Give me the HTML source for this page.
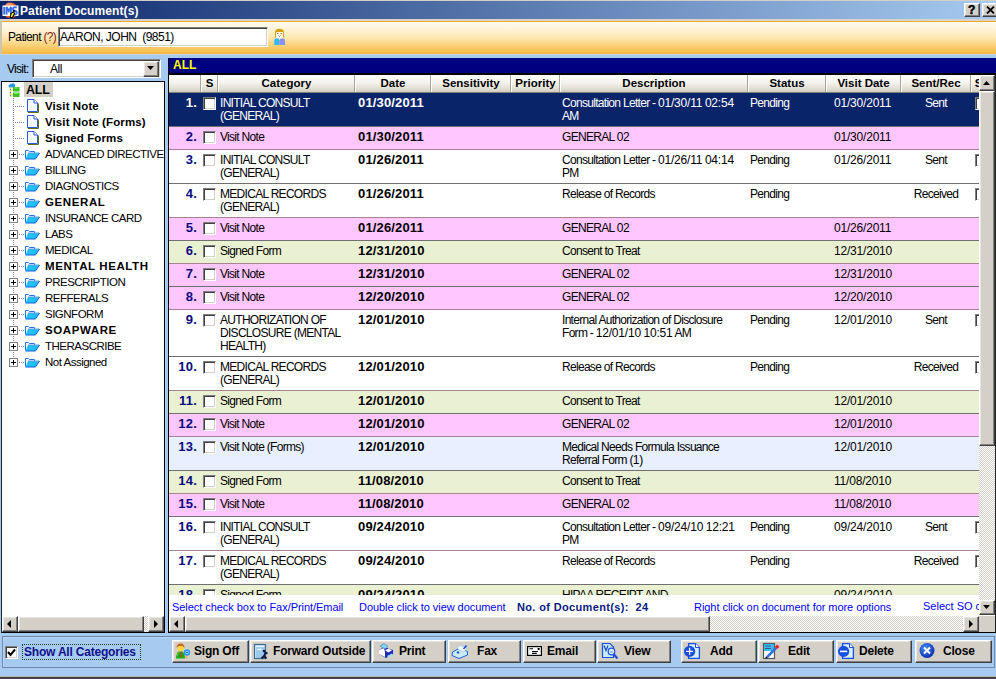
<!DOCTYPE html><html><head><meta charset="utf-8"><style>
*{box-sizing:border-box}
html,body{margin:0;padding:0}
body{width:996px;height:679px;position:relative;overflow:hidden;background:#a6caf0;font-family:'Liberation Sans',sans-serif;font-size:12px;color:#000}
.abs{position:absolute}
.t{position:absolute;white-space:nowrap;line-height:13px}
.btn3d{position:absolute;background:#d4d0c8;border-top:1px solid #fff;border-left:1px solid #fff;border-right:1px solid #404040;border-bottom:1px solid #404040;box-shadow:inset -1px -1px 0 #808080, inset 1px 1px 0 #e8e6e0}
.sunk{position:absolute;border-top:1px solid #808080;border-left:1px solid #808080;border-right:1px solid #fff;border-bottom:1px solid #fff;box-shadow:inset 1px 1px 0 #404040, inset -1px -1px 0 #d4d0c8}
.chk{position:absolute;width:13px;height:13px;background:#fff;border-top:1px solid #808080;border-left:1px solid #808080;border-right:1px solid #fff;border-bottom:1px solid #fff;box-shadow:inset 1px 1px 0 #404040, inset -1px -1px 0 #d4d0c8}
.dither{background-color:#fff;background-image:linear-gradient(45deg,#d4d0c8 25%,transparent 25%,transparent 75%,#d4d0c8 75%),linear-gradient(45deg,#d4d0c8 25%,transparent 25%,transparent 75%,#d4d0c8 75%);background-size:2px 2px;background-position:0 0,1px 1px}
.hd{position:absolute;top:75px;height:18px;background:linear-gradient(#fdfdfb 0%,#f4f3ee 45%,#e2ded4 80%,#d0ccc0 100%);border-bottom:1px solid #808078}
.hs{position:absolute;top:75px;width:2px;height:17px;border-left:1px solid #a8a498;border-right:1px solid #fff}
.ht{position:absolute;top:77px;font-weight:bold;font-size:11.5px;line-height:13px;white-space:nowrap;text-align:center}
.row{position:absolute;left:169px;width:810px}
.num{position:absolute;font-weight:bold;font-size:13px;color:#0a0a80;text-align:right;width:28px;left:0;top:6px;line-height:13px;letter-spacing:0.2px}
.cell{position:absolute;top:5px;font-size:12px;letter-spacing:-0.7px;line-height:13px;white-space:nowrap}
.date{position:absolute;top:6px;left:189px;font-weight:bold;font-size:13px;letter-spacing:0.15px;line-height:13px}
.dg{letter-spacing:-0.2px}
.tree{position:absolute;white-space:nowrap;font-size:11.5px;line-height:13px;letter-spacing:-0.5px}
.tb{font-weight:bold;letter-spacing:0.1px}
.btxt{position:absolute;top:4px;font-weight:bold;font-size:12px;line-height:13px;white-space:nowrap;letter-spacing:-0.2px}
</style></head><body>
<div class="abs" style="left:0;top:0;width:996px;height:1px;background:#d4d0c8"></div>
<div class="abs" style="left:0;top:1px;width:996px;height:18px;background:linear-gradient(90deg,#0a246a 0%,#a6caf0 100%)"></div>
<svg class="abs" style="left:1px;top:1px" width="18" height="18" viewBox="0 0 18 18">
<circle cx="9.5" cy="9.5" r="7.8" fill="#e85820"/><circle cx="8.5" cy="6" r="4.5" fill="#ffa080" opacity=".7"/>
<rect x="1.5" y="4.5" width="16" height="10.5" fill="#fff"/>
<path d="M3.2 6 V13.5 M5.6 13.5 V6 L7.8 10 L10 6 V13.5 M15.8 6.5 Q12 5.5 12 8 Q12 9.5 14 9.8 Q16 10.2 15.6 12.5 Q14.5 14.2 11.8 13" stroke="#3870f0" stroke-width="1.9" fill="none"/>
<path d="M9.2 16.5 L10 12.5 L12.5 10.5 L13.5 12.5 L11.5 16.5Z" fill="#f8f000" stroke="#000" stroke-width="1.1"/>
<circle cx="13" cy="10" r="1" fill="#000"/>
</svg>
<div class="t" style="left:20px;top:5px;color:#fff;font-weight:bold;font-size:12px;letter-spacing:0.1px">Patient Document(s)</div>
<div class="btn3d" style="left:964px;top:3px;width:16px;height:14px"><div class="t" style="left:3px;top:0px;font-weight:bold;font-size:12px;-webkit-text-stroke:0.5px #000">?</div></div>
<div class="btn3d" style="left:982px;top:3px;width:16px;height:14px"><svg class="abs" style="left:3px;top:2px" width="9" height="8"><path d="M1 0.5 L8 7.5 M8 0.5 L1 7.5" stroke="#000" stroke-width="1.8"/></svg></div>
<div class="abs" style="left:0;top:19px;width:996px;height:2px;background:#d8d4cc"></div>
<div class="abs" style="left:1px;top:21px;width:995px;height:33px;background:linear-gradient(#fffbee 0%,#fff5dc 20%,#fde6b0 50%,#f9ca68 80%,#f6b640 100%);border-top:1px solid #f0a828;border-left:1px solid #f0c070"></div>
<div class="t" style="left:8px;top:31px;font-size:12px;letter-spacing:-0.65px">Patient <span style="color:#8b1a1a">(?)</span></div>
<div class="sunk" style="left:58px;top:27px;width:210px;height:20px;background:#fff"></div>
<div class="t" style="left:60px;top:31px;font-size:12px;letter-spacing:-0.5px">AARON, JOHN&nbsp; (9851)</div>
<svg class="abs" style="left:274px;top:28px" width="12" height="18" viewBox="0 0 12 18">
<path d="M1 9.5 V4.5 Q1 0.8 5.5 0.8 Q10 0.8 10 4.5 V9.5 Z" fill="#d8a000"/>
<rect x="2.2" y="4" width="6.8" height="6.3" fill="#fff"/>
<path d="M3 5.6 h1.5 M6.6 5.6 h1.5" stroke="#806000" stroke-width=".9"/><path d="M4.5 7.4 L5.6 8.6 L6.7 7.4" stroke="#806000" stroke-width=".8" fill="none"/>
<path d="M0.3 17 V13 Q0.3 10.5 3 10.3 L5.5 11 V17Z" fill="#30b8f8"/>
<path d="M5.5 11 L8.2 10.3 Q11 10.5 11 13 V17 H5.5Z" fill="#8890f0"/>
<path d="M4.5 10.5 L5.6 12 L6.6 10.5Z" fill="#fff"/>
</svg>
<div class="abs" style="left:0;top:54px;width:996px;height:1px;background:#c8d4e0"></div>
<div class="t" style="left:7px;top:63px;font-size:12px;letter-spacing:-0.7px">Visit:</div>
<div class="sunk" style="left:32px;top:59px;width:129px;height:19px;background:#fff"></div>
<div class="t" style="left:50px;top:63px;font-size:12px;letter-spacing:-0.5px">All</div>
<div class="btn3d" style="left:143px;top:61px;width:16px;height:16px"><svg class="abs" style="left:3px;top:4px" width="8" height="5"><path d="M0 0 H7 L3.5 4Z" fill="#000"/></svg></div>
<div class="abs" style="left:1px;top:81px;width:164px;height:552px;background:#fff;border:1px solid #000;border-left-color:#202020"></div>
<div class="abs" style="left:24px;top:82px;width:29px;height:15px;background:#d4d0c8"></div>
<div class="t" style="left:26px;top:84px;font-weight:bold;font-size:12.5px;letter-spacing:-0.2px">ALL</div>
<svg class="abs" style="left:8px;top:83px" width="12" height="15" viewBox="0 0 12 15">
<path d="M0.5 3.5 Q0.5 1 3 1 Q4 0 6 0.5 Q7.5 1 7 3 L6.5 4.5 H1Z" fill="#2a98f0"/>
<path d="M2.5 4.5 V14" stroke="#e8d050" stroke-width="1.2"/><path d="M2.5 6 v1 M2.5 9 v1 M2.5 12 v1" stroke="#4070e0" stroke-width="1.2"/>
<path d="M2.5 7 H5 M2.5 12 H5" stroke="#e8d050"/>
<path d="M5 4 H11.5 V8.5 H5Z M5 9.5 H11.5 V14 H5Z" fill="#38c020"/><path d="M6 5 h4 M6 10.5 h4" stroke="#a0f080" stroke-width=".8"/>
</svg>
<div class="abs" style="left:13px;top:98px;width:1px;height:266px;background-image:linear-gradient(#808080 50%,transparent 50%);background-size:1px 2px"></div>
<div class="abs" style="left:2px;top:82px;width:162px;height:534px;overflow:hidden">
<div class="abs" style="left:11px;top:24px;width:11px;height:1px;background-image:linear-gradient(90deg,#808080 50%,transparent 50%);background-size:2px 1px"></div>
<svg class="abs" style="left:25px;top:17px" width="12" height="14" viewBox="0 0 12 14"><path d="M0.5 0.5 H7 L10.5 4 V12.5 H0.5Z" fill="#f4faff" stroke="#2a5ae0"/><path d="M7 0.5 V4 H10.5" fill="#fff" stroke="#2a5ae0"/><path d="M1 13.5 H11.5 V4.5" stroke="#607010" fill="none"/></svg>
<div class="tree tb" style="left:43px;top:18px">Visit Note</div>
<div class="abs" style="left:11px;top:40px;width:11px;height:1px;background-image:linear-gradient(90deg,#808080 50%,transparent 50%);background-size:2px 1px"></div>
<svg class="abs" style="left:25px;top:33px" width="12" height="14" viewBox="0 0 12 14"><path d="M0.5 0.5 H7 L10.5 4 V12.5 H0.5Z" fill="#f4faff" stroke="#2a5ae0"/><path d="M7 0.5 V4 H10.5" fill="#fff" stroke="#2a5ae0"/><path d="M1 13.5 H11.5 V4.5" stroke="#607010" fill="none"/></svg>
<div class="tree tb" style="left:43px;top:34px">Visit Note (Forms)</div>
<div class="abs" style="left:11px;top:56px;width:11px;height:1px;background-image:linear-gradient(90deg,#808080 50%,transparent 50%);background-size:2px 1px"></div>
<svg class="abs" style="left:25px;top:49px" width="12" height="14" viewBox="0 0 12 14"><path d="M0.5 0.5 H7 L10.5 4 V12.5 H0.5Z" fill="#f4faff" stroke="#2a5ae0"/><path d="M7 0.5 V4 H10.5" fill="#fff" stroke="#2a5ae0"/><path d="M1 13.5 H11.5 V4.5" stroke="#607010" fill="none"/></svg>
<div class="tree tb" style="left:43px;top:50px">Signed Forms</div>
<div class="abs" style="left:17px;top:72px;width:5px;height:1px;background-image:linear-gradient(90deg,#808080 50%,transparent 50%);background-size:2px 1px"></div>
<svg class="abs" style="left:7px;top:68px" width="9" height="9" viewBox="0 0 9 9"><rect x=".5" y=".5" width="8" height="8" fill="#fff" stroke="#808080"/><path d="M2 4.5 H7 M4.5 2 V7" stroke="#000"/></svg>
<svg class="abs" style="left:23px;top:68px" width="15" height="10" viewBox="0 0 15 10"><path d="M0.5 8.5 V0.5 H3.5 L4.5 1.5 H9.5 V3" fill="#fff" stroke="#2a70e8"/><path d="M3 3 H14.5 L10.5 9 H0.5Z" fill="#22bff2"/><path d="M0.5 9 H10.5 L14.5 3" stroke="#1060e0" fill="none"/><path d="M3 3 H14" stroke="#60a0f0"/></svg>
<div class="tree" style="left:43px;top:66px">ADVANCED DIRECTIVE</div>
<div class="abs" style="left:17px;top:88px;width:5px;height:1px;background-image:linear-gradient(90deg,#808080 50%,transparent 50%);background-size:2px 1px"></div>
<svg class="abs" style="left:7px;top:84px" width="9" height="9" viewBox="0 0 9 9"><rect x=".5" y=".5" width="8" height="8" fill="#fff" stroke="#808080"/><path d="M2 4.5 H7 M4.5 2 V7" stroke="#000"/></svg>
<svg class="abs" style="left:23px;top:84px" width="15" height="10" viewBox="0 0 15 10"><path d="M0.5 8.5 V0.5 H3.5 L4.5 1.5 H9.5 V3" fill="#fff" stroke="#2a70e8"/><path d="M3 3 H14.5 L10.5 9 H0.5Z" fill="#22bff2"/><path d="M0.5 9 H10.5 L14.5 3" stroke="#1060e0" fill="none"/><path d="M3 3 H14" stroke="#60a0f0"/></svg>
<div class="tree" style="left:43px;top:82px">BILLING</div>
<div class="abs" style="left:17px;top:104px;width:5px;height:1px;background-image:linear-gradient(90deg,#808080 50%,transparent 50%);background-size:2px 1px"></div>
<svg class="abs" style="left:7px;top:100px" width="9" height="9" viewBox="0 0 9 9"><rect x=".5" y=".5" width="8" height="8" fill="#fff" stroke="#808080"/><path d="M2 4.5 H7 M4.5 2 V7" stroke="#000"/></svg>
<svg class="abs" style="left:23px;top:100px" width="15" height="10" viewBox="0 0 15 10"><path d="M0.5 8.5 V0.5 H3.5 L4.5 1.5 H9.5 V3" fill="#fff" stroke="#2a70e8"/><path d="M3 3 H14.5 L10.5 9 H0.5Z" fill="#22bff2"/><path d="M0.5 9 H10.5 L14.5 3" stroke="#1060e0" fill="none"/><path d="M3 3 H14" stroke="#60a0f0"/></svg>
<div class="tree" style="left:43px;top:98px">DIAGNOSTICS</div>
<div class="abs" style="left:17px;top:120px;width:5px;height:1px;background-image:linear-gradient(90deg,#808080 50%,transparent 50%);background-size:2px 1px"></div>
<svg class="abs" style="left:7px;top:116px" width="9" height="9" viewBox="0 0 9 9"><rect x=".5" y=".5" width="8" height="8" fill="#fff" stroke="#808080"/><path d="M2 4.5 H7 M4.5 2 V7" stroke="#000"/></svg>
<svg class="abs" style="left:23px;top:116px" width="15" height="10" viewBox="0 0 15 10"><path d="M0.5 8.5 V0.5 H3.5 L4.5 1.5 H9.5 V3" fill="#fff" stroke="#2a70e8"/><path d="M3 3 H14.5 L10.5 9 H0.5Z" fill="#22bff2"/><path d="M0.5 9 H10.5 L14.5 3" stroke="#1060e0" fill="none"/><path d="M3 3 H14" stroke="#60a0f0"/></svg>
<div class="tree tb" style="left:43px;top:114px;letter-spacing:0.6px">GENERAL</div>
<div class="abs" style="left:17px;top:136px;width:5px;height:1px;background-image:linear-gradient(90deg,#808080 50%,transparent 50%);background-size:2px 1px"></div>
<svg class="abs" style="left:7px;top:132px" width="9" height="9" viewBox="0 0 9 9"><rect x=".5" y=".5" width="8" height="8" fill="#fff" stroke="#808080"/><path d="M2 4.5 H7 M4.5 2 V7" stroke="#000"/></svg>
<svg class="abs" style="left:23px;top:132px" width="15" height="10" viewBox="0 0 15 10"><path d="M0.5 8.5 V0.5 H3.5 L4.5 1.5 H9.5 V3" fill="#fff" stroke="#2a70e8"/><path d="M3 3 H14.5 L10.5 9 H0.5Z" fill="#22bff2"/><path d="M0.5 9 H10.5 L14.5 3" stroke="#1060e0" fill="none"/><path d="M3 3 H14" stroke="#60a0f0"/></svg>
<div class="tree" style="left:43px;top:130px">INSURANCE CARD</div>
<div class="abs" style="left:17px;top:152px;width:5px;height:1px;background-image:linear-gradient(90deg,#808080 50%,transparent 50%);background-size:2px 1px"></div>
<svg class="abs" style="left:7px;top:148px" width="9" height="9" viewBox="0 0 9 9"><rect x=".5" y=".5" width="8" height="8" fill="#fff" stroke="#808080"/><path d="M2 4.5 H7 M4.5 2 V7" stroke="#000"/></svg>
<svg class="abs" style="left:23px;top:148px" width="15" height="10" viewBox="0 0 15 10"><path d="M0.5 8.5 V0.5 H3.5 L4.5 1.5 H9.5 V3" fill="#fff" stroke="#2a70e8"/><path d="M3 3 H14.5 L10.5 9 H0.5Z" fill="#22bff2"/><path d="M0.5 9 H10.5 L14.5 3" stroke="#1060e0" fill="none"/><path d="M3 3 H14" stroke="#60a0f0"/></svg>
<div class="tree" style="left:43px;top:146px">LABS</div>
<div class="abs" style="left:17px;top:168px;width:5px;height:1px;background-image:linear-gradient(90deg,#808080 50%,transparent 50%);background-size:2px 1px"></div>
<svg class="abs" style="left:7px;top:164px" width="9" height="9" viewBox="0 0 9 9"><rect x=".5" y=".5" width="8" height="8" fill="#fff" stroke="#808080"/><path d="M2 4.5 H7 M4.5 2 V7" stroke="#000"/></svg>
<svg class="abs" style="left:23px;top:164px" width="15" height="10" viewBox="0 0 15 10"><path d="M0.5 8.5 V0.5 H3.5 L4.5 1.5 H9.5 V3" fill="#fff" stroke="#2a70e8"/><path d="M3 3 H14.5 L10.5 9 H0.5Z" fill="#22bff2"/><path d="M0.5 9 H10.5 L14.5 3" stroke="#1060e0" fill="none"/><path d="M3 3 H14" stroke="#60a0f0"/></svg>
<div class="tree" style="left:43px;top:162px">MEDICAL</div>
<div class="abs" style="left:17px;top:184px;width:5px;height:1px;background-image:linear-gradient(90deg,#808080 50%,transparent 50%);background-size:2px 1px"></div>
<svg class="abs" style="left:7px;top:180px" width="9" height="9" viewBox="0 0 9 9"><rect x=".5" y=".5" width="8" height="8" fill="#fff" stroke="#808080"/><path d="M2 4.5 H7 M4.5 2 V7" stroke="#000"/></svg>
<svg class="abs" style="left:23px;top:180px" width="15" height="10" viewBox="0 0 15 10"><path d="M0.5 8.5 V0.5 H3.5 L4.5 1.5 H9.5 V3" fill="#fff" stroke="#2a70e8"/><path d="M3 3 H14.5 L10.5 9 H0.5Z" fill="#22bff2"/><path d="M0.5 9 H10.5 L14.5 3" stroke="#1060e0" fill="none"/><path d="M3 3 H14" stroke="#60a0f0"/></svg>
<div class="tree tb" style="left:43px;top:178px;letter-spacing:0.6px">MENTAL HEALTH</div>
<div class="abs" style="left:17px;top:200px;width:5px;height:1px;background-image:linear-gradient(90deg,#808080 50%,transparent 50%);background-size:2px 1px"></div>
<svg class="abs" style="left:7px;top:196px" width="9" height="9" viewBox="0 0 9 9"><rect x=".5" y=".5" width="8" height="8" fill="#fff" stroke="#808080"/><path d="M2 4.5 H7 M4.5 2 V7" stroke="#000"/></svg>
<svg class="abs" style="left:23px;top:196px" width="15" height="10" viewBox="0 0 15 10"><path d="M0.5 8.5 V0.5 H3.5 L4.5 1.5 H9.5 V3" fill="#fff" stroke="#2a70e8"/><path d="M3 3 H14.5 L10.5 9 H0.5Z" fill="#22bff2"/><path d="M0.5 9 H10.5 L14.5 3" stroke="#1060e0" fill="none"/><path d="M3 3 H14" stroke="#60a0f0"/></svg>
<div class="tree" style="left:43px;top:194px">PRESCRIPTION</div>
<div class="abs" style="left:17px;top:216px;width:5px;height:1px;background-image:linear-gradient(90deg,#808080 50%,transparent 50%);background-size:2px 1px"></div>
<svg class="abs" style="left:7px;top:212px" width="9" height="9" viewBox="0 0 9 9"><rect x=".5" y=".5" width="8" height="8" fill="#fff" stroke="#808080"/><path d="M2 4.5 H7 M4.5 2 V7" stroke="#000"/></svg>
<svg class="abs" style="left:23px;top:212px" width="15" height="10" viewBox="0 0 15 10"><path d="M0.5 8.5 V0.5 H3.5 L4.5 1.5 H9.5 V3" fill="#fff" stroke="#2a70e8"/><path d="M3 3 H14.5 L10.5 9 H0.5Z" fill="#22bff2"/><path d="M0.5 9 H10.5 L14.5 3" stroke="#1060e0" fill="none"/><path d="M3 3 H14" stroke="#60a0f0"/></svg>
<div class="tree" style="left:43px;top:210px">REFFERALS</div>
<div class="abs" style="left:17px;top:232px;width:5px;height:1px;background-image:linear-gradient(90deg,#808080 50%,transparent 50%);background-size:2px 1px"></div>
<svg class="abs" style="left:7px;top:228px" width="9" height="9" viewBox="0 0 9 9"><rect x=".5" y=".5" width="8" height="8" fill="#fff" stroke="#808080"/><path d="M2 4.5 H7 M4.5 2 V7" stroke="#000"/></svg>
<svg class="abs" style="left:23px;top:228px" width="15" height="10" viewBox="0 0 15 10"><path d="M0.5 8.5 V0.5 H3.5 L4.5 1.5 H9.5 V3" fill="#fff" stroke="#2a70e8"/><path d="M3 3 H14.5 L10.5 9 H0.5Z" fill="#22bff2"/><path d="M0.5 9 H10.5 L14.5 3" stroke="#1060e0" fill="none"/><path d="M3 3 H14" stroke="#60a0f0"/></svg>
<div class="tree" style="left:43px;top:226px">SIGNFORM</div>
<div class="abs" style="left:17px;top:248px;width:5px;height:1px;background-image:linear-gradient(90deg,#808080 50%,transparent 50%);background-size:2px 1px"></div>
<svg class="abs" style="left:7px;top:244px" width="9" height="9" viewBox="0 0 9 9"><rect x=".5" y=".5" width="8" height="8" fill="#fff" stroke="#808080"/><path d="M2 4.5 H7 M4.5 2 V7" stroke="#000"/></svg>
<svg class="abs" style="left:23px;top:244px" width="15" height="10" viewBox="0 0 15 10"><path d="M0.5 8.5 V0.5 H3.5 L4.5 1.5 H9.5 V3" fill="#fff" stroke="#2a70e8"/><path d="M3 3 H14.5 L10.5 9 H0.5Z" fill="#22bff2"/><path d="M0.5 9 H10.5 L14.5 3" stroke="#1060e0" fill="none"/><path d="M3 3 H14" stroke="#60a0f0"/></svg>
<div class="tree tb" style="left:43px;top:242px;letter-spacing:0.6px">SOAPWARE</div>
<div class="abs" style="left:17px;top:264px;width:5px;height:1px;background-image:linear-gradient(90deg,#808080 50%,transparent 50%);background-size:2px 1px"></div>
<svg class="abs" style="left:7px;top:260px" width="9" height="9" viewBox="0 0 9 9"><rect x=".5" y=".5" width="8" height="8" fill="#fff" stroke="#808080"/><path d="M2 4.5 H7 M4.5 2 V7" stroke="#000"/></svg>
<svg class="abs" style="left:23px;top:260px" width="15" height="10" viewBox="0 0 15 10"><path d="M0.5 8.5 V0.5 H3.5 L4.5 1.5 H9.5 V3" fill="#fff" stroke="#2a70e8"/><path d="M3 3 H14.5 L10.5 9 H0.5Z" fill="#22bff2"/><path d="M0.5 9 H10.5 L14.5 3" stroke="#1060e0" fill="none"/><path d="M3 3 H14" stroke="#60a0f0"/></svg>
<div class="tree" style="left:43px;top:258px">THERASCRIBE</div>
<div class="abs" style="left:17px;top:280px;width:5px;height:1px;background-image:linear-gradient(90deg,#808080 50%,transparent 50%);background-size:2px 1px"></div>
<svg class="abs" style="left:7px;top:276px" width="9" height="9" viewBox="0 0 9 9"><rect x=".5" y=".5" width="8" height="8" fill="#fff" stroke="#808080"/><path d="M2 4.5 H7 M4.5 2 V7" stroke="#000"/></svg>
<svg class="abs" style="left:23px;top:276px" width="15" height="10" viewBox="0 0 15 10"><path d="M0.5 8.5 V0.5 H3.5 L4.5 1.5 H9.5 V3" fill="#fff" stroke="#2a70e8"/><path d="M3 3 H14.5 L10.5 9 H0.5Z" fill="#22bff2"/><path d="M0.5 9 H10.5 L14.5 3" stroke="#1060e0" fill="none"/><path d="M3 3 H14" stroke="#60a0f0"/></svg>
<div class="tree" style="left:43px;top:274px">Not Assigned</div>
</div>
<div class="abs dither" style="left:2px;top:616px;width:162px;height:16px"></div>
<div class="btn3d" style="left:2px;top:616px;width:16px;height:16px"><svg class="abs" style="left:4px;top:3px" width="5" height="8"><path d="M4 0 V8 L0 4Z" fill="#000"/></svg></div>
<div class="btn3d" style="left:18px;top:616px;width:126px;height:16px"></div>
<div class="btn3d" style="left:148px;top:616px;width:16px;height:16px"><svg class="abs" style="left:5px;top:3px" width="5" height="8"><path d="M0 0 V8 L4 4Z" fill="#000"/></svg></div>
<div class="abs" style="left:168px;top:58px;width:828px;height:575px;background:#fff;border-left:1px solid #000;border-bottom:1px solid #000;border-right:1px solid #202020"></div>
<div class="abs" style="left:169px;top:58px;width:827px;height:15px;background:#000080"></div>
<div class="t" style="left:173px;top:59px;color:#ffff00;font-weight:bold;font-size:12px">ALL</div>
<div class="abs" style="left:169px;top:73px;width:827px;height:2px;background:#000"></div>
<div class="hd" style="left:169px;width:810px"></div>
<div class="hs" style="left:200px"></div>
<div class="hs" style="left:217px"></div>
<div class="ht" style="left:201px;width:17px">S</div>
<div class="hs" style="left:354px"></div>
<div class="ht" style="left:218px;width:137px">Category</div>
<div class="hs" style="left:430px"></div>
<div class="ht" style="left:355px;width:76px">Date</div>
<div class="hs" style="left:510px"></div>
<div class="ht" style="left:431px;width:80px">Sensitivity</div>
<div class="hs" style="left:559px"></div>
<div class="ht" style="left:511px;width:49px">Priority</div>
<div class="hs" style="left:747px"></div>
<div class="ht" style="left:560px;width:188px">Description</div>
<div class="hs" style="left:825px"></div>
<div class="ht" style="left:748px;width:78px">Status</div>
<div class="hs" style="left:900px"></div>
<div class="ht" style="left:826px;width:75px">Visit Date</div>
<div class="hs" style="left:970px"></div>
<div class="ht" style="left:901px;width:70px">Sent/Rec</div>
<div class="ht" style="left:971px;width:15px">S</div>
<div class="abs" style="left:169px;top:93px;width:810px;height:502px;overflow:hidden">
<div class="abs" style="left:0;top:0px;width:810px;height:34px;background:#0a246a;border-bottom:1px solid #707070;color:#fff">
<div class="num" style="color:#fff;left:0px;width:28px;top:3px">1.</div>
<div class="chk" style="left:34px;top:4px"></div>
<div class="cell" style="left:51px;top:4px">INITIAL CONSULT<br>(GENERAL)</div>
<div class="date" style="left:189px;top:3px">01/30/2011</div>
<div class="cell" style="left:393px;top:4px">Consultation Letter - <span class="dg">01/30/11</span> <span class="dg">02:54</span><br>AM</div>
<div class="cell" style="left:581px;top:4px">Pending</div>
<div class="cell" style="left:665px;top:4px"><span class="dg">01/30/2011</span></div>
<div class="cell" style="left:732px;width:70px;text-align:center;top:4px">Sent</div>
<div class="chk" style="left:806px;top:4px"></div>
</div>
<div class="abs" style="left:0;top:34px;width:810px;height:23px;background:#ffc6ff;border-bottom:1px solid #a88490;color:#000">
<div class="num" style="color:#0a0a80;left:0px;width:28px;top:3px">2.</div>
<div class="chk" style="left:34px;top:4px"></div>
<div class="cell" style="left:51px;top:4px">Visit Note</div>
<div class="date" style="left:189px;top:3px">01/30/2011</div>
<div class="cell" style="left:393px;top:4px">GENERAL <span class="dg">02</span></div>
<div class="cell" style="left:665px;top:4px"><span class="dg">01/30/2011</span></div>
</div>
<div class="abs" style="left:0;top:57px;width:810px;height:34px;background:#ffffff;border-bottom:1px solid #707070;color:#000">
<div class="num" style="color:#0a0a80;left:0px;width:28px;top:3px">3.</div>
<div class="chk" style="left:34px;top:4px"></div>
<div class="cell" style="left:51px;top:4px">INITIAL CONSULT<br>(GENERAL)</div>
<div class="date" style="left:189px;top:3px">01/26/2011</div>
<div class="cell" style="left:393px;top:4px">Consultation Letter - <span class="dg">01/26/11</span> <span class="dg">04:14</span><br>PM</div>
<div class="cell" style="left:581px;top:4px">Pending</div>
<div class="cell" style="left:665px;top:4px"><span class="dg">01/26/2011</span></div>
<div class="cell" style="left:732px;width:70px;text-align:center;top:4px">Sent</div>
<div class="chk" style="left:806px;top:4px"></div>
</div>
<div class="abs" style="left:0;top:91px;width:810px;height:34px;background:#ffffff;border-bottom:1px solid #a88490;color:#000">
<div class="num" style="color:#0a0a80;left:0px;width:28px;top:3px">4.</div>
<div class="chk" style="left:34px;top:4px"></div>
<div class="cell" style="left:51px;top:4px">MEDICAL RECORDS<br>(GENERAL)</div>
<div class="date" style="left:189px;top:3px">01/26/2011</div>
<div class="cell" style="left:393px;top:4px">Release of Records</div>
<div class="cell" style="left:581px;top:4px">Pending</div>
<div class="cell" style="left:732px;width:70px;text-align:center;top:4px">Received</div>
<div class="chk" style="left:806px;top:4px"></div>
</div>
<div class="abs" style="left:0;top:125px;width:810px;height:23px;background:#ffc6ff;border-bottom:1px solid #707070;color:#000">
<div class="num" style="color:#0a0a80;left:0px;width:28px;top:3px">5.</div>
<div class="chk" style="left:34px;top:4px"></div>
<div class="cell" style="left:51px;top:4px">Visit Note</div>
<div class="date" style="left:189px;top:3px">01/26/2011</div>
<div class="cell" style="left:393px;top:4px">GENERAL <span class="dg">02</span></div>
<div class="cell" style="left:665px;top:4px"><span class="dg">01/26/2011</span></div>
</div>
<div class="abs" style="left:0;top:148px;width:810px;height:23px;background:#eaf1d2;border-bottom:1px solid #a88490;color:#000">
<div class="num" style="color:#0a0a80;left:0px;width:28px;top:3px">6.</div>
<div class="chk" style="left:34px;top:4px"></div>
<div class="cell" style="left:51px;top:4px">Signed Form</div>
<div class="date" style="left:189px;top:3px">12/31/2010</div>
<div class="cell" style="left:393px;top:4px">Consent to Treat</div>
<div class="cell" style="left:665px;top:4px"><span class="dg">12/31/2010</span></div>
</div>
<div class="abs" style="left:0;top:171px;width:810px;height:23px;background:#ffc6ff;border-bottom:1px solid #707070;color:#000">
<div class="num" style="color:#0a0a80;left:0px;width:28px;top:3px">7.</div>
<div class="chk" style="left:34px;top:4px"></div>
<div class="cell" style="left:51px;top:4px">Visit Note</div>
<div class="date" style="left:189px;top:3px">12/31/2010</div>
<div class="cell" style="left:393px;top:4px">GENERAL <span class="dg">02</span></div>
<div class="cell" style="left:665px;top:4px"><span class="dg">12/31/2010</span></div>
</div>
<div class="abs" style="left:0;top:194px;width:810px;height:23px;background:#ffc6ff;border-bottom:1px solid #a88490;color:#000">
<div class="num" style="color:#0a0a80;left:0px;width:28px;top:3px">8.</div>
<div class="chk" style="left:34px;top:4px"></div>
<div class="cell" style="left:51px;top:4px">Visit Note</div>
<div class="date" style="left:189px;top:3px">12/20/2010</div>
<div class="cell" style="left:393px;top:4px">GENERAL <span class="dg">02</span></div>
<div class="cell" style="left:665px;top:4px"><span class="dg">12/20/2010</span></div>
</div>
<div class="abs" style="left:0;top:217px;width:810px;height:47px;background:#ffffff;border-bottom:1px solid #707070;color:#000">
<div class="num" style="color:#0a0a80;left:0px;width:28px;top:3px">9.</div>
<div class="chk" style="left:34px;top:4px"></div>
<div class="cell" style="left:51px;top:4px">AUTHORIZATION OF<br>DISCLOSURE (MENTAL<br>HEALTH)</div>
<div class="date" style="left:189px;top:3px">12/01/2010</div>
<div class="cell" style="left:393px;top:4px">Internal Authorization of Disclosure<br>Form - <span class="dg">12/01/10</span> <span class="dg">10:51</span> AM</div>
<div class="cell" style="left:581px;top:4px">Pending</div>
<div class="cell" style="left:665px;top:4px"><span class="dg">12/01/2010</span></div>
<div class="cell" style="left:732px;width:70px;text-align:center;top:4px">Sent</div>
<div class="chk" style="left:806px;top:4px"></div>
</div>
<div class="abs" style="left:0;top:264px;width:810px;height:34px;background:#ffffff;border-bottom:1px solid #a88490;color:#000">
<div class="num" style="color:#0a0a80;left:0px;width:28px;top:3px">10.</div>
<div class="chk" style="left:34px;top:4px"></div>
<div class="cell" style="left:51px;top:4px">MEDICAL RECORDS<br>(GENERAL)</div>
<div class="date" style="left:189px;top:3px">12/01/2010</div>
<div class="cell" style="left:393px;top:4px">Release of Records</div>
<div class="cell" style="left:581px;top:4px">Pending</div>
<div class="cell" style="left:732px;width:70px;text-align:center;top:4px">Received</div>
<div class="chk" style="left:806px;top:4px"></div>
</div>
<div class="abs" style="left:0;top:298px;width:810px;height:23px;background:#eaf1d2;border-bottom:1px solid #707070;color:#000">
<div class="num" style="color:#0a0a80;left:0px;width:28px;top:3px">11.</div>
<div class="chk" style="left:34px;top:4px"></div>
<div class="cell" style="left:51px;top:4px">Signed Form</div>
<div class="date" style="left:189px;top:3px">12/01/2010</div>
<div class="cell" style="left:393px;top:4px">Consent to Treat</div>
<div class="cell" style="left:665px;top:4px"><span class="dg">12/01/2010</span></div>
</div>
<div class="abs" style="left:0;top:321px;width:810px;height:23px;background:#ffc6ff;border-bottom:1px solid #a88490;color:#000">
<div class="num" style="color:#0a0a80;left:0px;width:28px;top:3px">12.</div>
<div class="chk" style="left:34px;top:4px"></div>
<div class="cell" style="left:51px;top:4px">Visit Note</div>
<div class="date" style="left:189px;top:3px">12/01/2010</div>
<div class="cell" style="left:393px;top:4px">GENERAL <span class="dg">02</span></div>
<div class="cell" style="left:665px;top:4px"><span class="dg">12/01/2010</span></div>
</div>
<div class="abs" style="left:0;top:344px;width:810px;height:34px;background:#e8f0ff;border-bottom:1px solid #707070;color:#000">
<div class="num" style="color:#0a0a80;left:0px;width:28px;top:3px">13.</div>
<div class="chk" style="left:34px;top:4px"></div>
<div class="cell" style="left:51px;top:4px">Visit Note (Forms)</div>
<div class="date" style="left:189px;top:3px">12/01/2010</div>
<div class="cell" style="left:393px;top:4px">Medical Needs Formula Issuance<br>Referral Form (<span class="dg">1</span>)</div>
<div class="cell" style="left:665px;top:4px"><span class="dg">12/01/2010</span></div>
</div>
<div class="abs" style="left:0;top:378px;width:810px;height:23px;background:#eaf1d2;border-bottom:1px solid #a88490;color:#000">
<div class="num" style="color:#0a0a80;left:0px;width:28px;top:3px">14.</div>
<div class="chk" style="left:34px;top:4px"></div>
<div class="cell" style="left:51px;top:4px">Signed Form</div>
<div class="date" style="left:189px;top:3px">11/08/2010</div>
<div class="cell" style="left:393px;top:4px">Consent to Treat</div>
<div class="cell" style="left:665px;top:4px"><span class="dg">11/08/2010</span></div>
</div>
<div class="abs" style="left:0;top:401px;width:810px;height:23px;background:#ffc6ff;border-bottom:1px solid #707070;color:#000">
<div class="num" style="color:#0a0a80;left:0px;width:28px;top:3px">15.</div>
<div class="chk" style="left:34px;top:4px"></div>
<div class="cell" style="left:51px;top:4px">Visit Note</div>
<div class="date" style="left:189px;top:3px">11/08/2010</div>
<div class="cell" style="left:393px;top:4px">GENERAL <span class="dg">02</span></div>
<div class="cell" style="left:665px;top:4px"><span class="dg">11/08/2010</span></div>
</div>
<div class="abs" style="left:0;top:424px;width:810px;height:34px;background:#ffffff;border-bottom:1px solid #a88490;color:#000">
<div class="num" style="color:#0a0a80;left:0px;width:28px;top:3px">16.</div>
<div class="chk" style="left:34px;top:4px"></div>
<div class="cell" style="left:51px;top:4px">INITIAL CONSULT<br>(GENERAL)</div>
<div class="date" style="left:189px;top:3px">09/24/2010</div>
<div class="cell" style="left:393px;top:4px">Consultation Letter - <span class="dg">09/24/10</span> <span class="dg">12:21</span><br>PM</div>
<div class="cell" style="left:581px;top:4px">Pending</div>
<div class="cell" style="left:665px;top:4px"><span class="dg">09/24/2010</span></div>
<div class="cell" style="left:732px;width:70px;text-align:center;top:4px">Sent</div>
<div class="chk" style="left:806px;top:4px"></div>
</div>
<div class="abs" style="left:0;top:458px;width:810px;height:34px;background:#ffffff;border-bottom:1px solid #707070;color:#000">
<div class="num" style="color:#0a0a80;left:0px;width:28px;top:3px">17.</div>
<div class="chk" style="left:34px;top:4px"></div>
<div class="cell" style="left:51px;top:4px">MEDICAL RECORDS<br>(GENERAL)</div>
<div class="date" style="left:189px;top:3px">09/24/2010</div>
<div class="cell" style="left:393px;top:4px">Release of Records</div>
<div class="cell" style="left:581px;top:4px">Pending</div>
<div class="cell" style="left:732px;width:70px;text-align:center;top:4px">Received</div>
<div class="chk" style="left:806px;top:4px"></div>
</div>
<div class="abs" style="left:0;top:492px;width:810px;height:23px;background:#eaf1d2;border-bottom:1px solid #a88490;color:#000">
<div class="num" style="color:#0a0a80;left:0px;width:28px;top:3px">18.</div>
<div class="chk" style="left:34px;top:4px"></div>
<div class="cell" style="left:51px;top:4px">Signed Form</div>
<div class="date" style="left:189px;top:3px">09/24/2010</div>
<div class="cell" style="left:393px;top:4px">HIPAA RECEIPT AND</div>
<div class="cell" style="left:665px;top:4px"><span class="dg">09/24/2010</span></div>
</div>
</div>
<div class="t" style="left:172px;top:601px;font-size:11px;color:#0000ff;letter-spacing:-0.05px">Select check box to Fax/Print/Email</div>
<div class="t" style="left:359px;top:601px;font-size:11px;color:#0000ff;letter-spacing:-0.05px">Double click to view document</div>
<div class="t" style="left:517px;top:601px;font-size:11px;font-weight:bold;color:#0a1a80;letter-spacing:0.35px">No. of Document(s):&nbsp; 24</div>
<div class="t" style="left:694px;top:601px;font-size:11px;color:#0000ff;letter-spacing:-0.05px">Right click on document for more options</div>
<div class="abs" style="left:920px;top:598px;width:59px;height:17px;overflow:hidden"><div class="t" style="left:3px;top:2px;font-size:11px;color:#0000ff">Select SO check</div></div>
<div class="abs dither" style="left:979px;top:75px;width:16px;height:540px"></div>
<div class="btn3d" style="left:979px;top:75px;width:16px;height:16px"><svg class="abs" style="left:3px;top:5px" width="8" height="5"><path d="M0 4 H7 L3.5 0Z" fill="#000"/></svg></div>
<div class="btn3d" style="left:979px;top:91px;width:16px;height:355px"></div>
<div class="btn3d" style="left:979px;top:600px;width:16px;height:15px"><svg class="abs" style="left:3px;top:4px" width="8" height="5"><path d="M0 0 H7 L3.5 4Z" fill="#000"/></svg></div>
<div class="abs dither" style="left:169px;top:616px;width:810px;height:16px"></div>
<div class="btn3d" style="left:169px;top:616px;width:16px;height:16px"><svg class="abs" style="left:4px;top:3px" width="5" height="8"><path d="M4 0 V8 L0 4Z" fill="#000"/></svg></div>
<div class="btn3d" style="left:185px;top:616px;width:525px;height:16px"></div>
<div class="btn3d" style="left:963px;top:616px;width:16px;height:16px"><svg class="abs" style="left:5px;top:3px" width="5" height="8"><path d="M0 0 V8 L4 4Z" fill="#000"/></svg></div>
<div class="abs" style="left:979px;top:616px;width:16px;height:16px;background:#d4d0c8"></div>
<div class="abs" style="left:2px;top:636px;width:993px;height:32px;border:1px solid #6c88b0;box-shadow:inset 1px 1px 0 #b8d4f4"></div>
<div class="chk" style="left:5px;top:646px"><svg class="abs" style="left:1px;top:1px" width="9" height="9"><path d="M1 4 L3.5 7 L8 1.5" stroke="#000" stroke-width="2" fill="none"/></svg></div>
<div class="abs" style="left:22px;top:644px;width:119px;height:16px;border:1px dotted #204020"></div>
<div class="t" style="left:24px;top:646px;font-size:12px;font-weight:bold;color:#10108a;letter-spacing:-0.2px">Show All Categories</div>
<div class="btn3d" style="left:172px;top:640px;width:77px;height:23px">
<div class="btxt" style="left:21px">Sign Off</div>
</div>
<svg class="abs" style="left:175px;top:643px" width="17" height="17" viewBox="0 0 17 17"><path d="M1 15.5 Q1 8 5.5 8 Q10 8 10 15.5Z" fill="#20a818"/><path d="M2 13 Q2.5 9.5 5.5 9" stroke="#60d050" stroke-width="1" fill="none"/><path d="M5.5 8.5 L5.5 14" stroke="#d03838" stroke-width="1.3"/><circle cx="5.5" cy="5.5" r="3" fill="#ffd840"/><path d="M1.5 5 Q1.5 0.5 5.5 0.5 Q9.5 0.5 9.5 5 Q8 2.5 5.5 3 Q3 2.5 1.5 5Z" fill="#c86818"/><path d="M10 13 Q10 16 12 16 Q13 14 11.5 12.5Z" fill="#f0b060"/><circle cx="12" cy="9.5" r="3.2" fill="#2898f0"/><circle cx="12" cy="9.5" r="1.6" fill="#a0e0ff"/><path d="M11 9.5 h2" stroke="#2070c0"/></svg>
<div class="btn3d" style="left:250px;top:640px;width:121px;height:23px">
<div class="btxt" style="left:22px">Forward Outside</div>
</div>
<svg class="abs" style="left:253px;top:643px" width="16" height="17" viewBox="0 0 16 17"><rect x="1.5" y="1.5" width="11" height="14" fill="#9ccbea" stroke="#46688e" stroke-width="1.2"/><rect x="2.5" y="2.5" width="9" height="1.5" fill="#e8f6ff"/><path d="M4.5 6.5 h4" stroke="#fff" stroke-width="1.3"/><path d="M2.6 3 V15" stroke="#c8e8f8" stroke-width=".8"/><path d="M10.5 8.5 Q12 8 12.5 10 L11 13 L13.5 15.5 M11 13 L8.5 15.5 M11.5 10.5 L14.5 10" stroke="#0a1848" stroke-width="1.8" fill="none"/><circle cx="11" cy="8" r="1.3" fill="#0a1848"/></svg>
<div class="btn3d" style="left:372px;top:640px;width:74px;height:23px">
<div class="btxt" style="left:26px">Print</div>
</div>
<svg class="abs" style="left:377px;top:642px" width="18" height="17" viewBox="0 0 18 17"><path d="M2 8 L7 5 L16 8 L16 12 L9 16 L2 12Z" fill="#2028b0"/><path d="M2 8 L7 6 L8 10 L8 15 L2 12Z" fill="#fff"/><path d="M3 4 L7 1.5 L11 4.5 L8 7Z" fill="#7ad8f8" stroke="#5070b0" stroke-width=".6"/><path d="M8 8 L12 6.5 L15 8.5 L11 10.5Z" fill="#f4f4ff"/><path d="M10 14 L15 11.5 L15.5 13 L11 15.5Z" fill="#90e8f8"/></svg>
<div class="btn3d" style="left:448px;top:640px;width:73px;height:23px">
<div class="btxt" style="left:28px">Fax</div>
</div>
<svg class="abs" style="left:451px;top:644px" width="18" height="16" viewBox="0 0 18 16"><path d="M1.5 8 L9 4 L16.5 7.5 L16.5 11 L8 14.5 L1 11.5Z" fill="#c8ecfa" stroke="#2060e0" stroke-width="1"/><path d="M6 3 Q10 0 13 3 L16 4 L13 8 L8 6Z" fill="#f4fcff" stroke="#90b8e8" stroke-width=".6"/><path d="M15.5 1.5 L12.5 5" stroke="#1848d8" stroke-width="1.5"/><path d="M5.5 8.5 l1.5 1.5 l1.5 -1.5 l-1.5 -1.5z" fill="#1848d8"/></svg>
<div class="btn3d" style="left:523px;top:640px;width:73px;height:23px">
<div class="btxt" style="left:23px">Email</div>
</div>
<svg class="abs" style="left:527px;top:646px" width="15" height="10" viewBox="0 0 15 10"><rect x=".6" y=".6" width="13.8" height="8.8" fill="#fff" stroke="#000" stroke-width="1.2"/><path d="M2.5 2.7 H6 M5 5.5 H10.8 M5 7.4 H9.8" stroke="#000" stroke-width="1.1"/><rect x="10.6" y="2" width="2" height="2" fill="#000"/></svg>
<div class="btn3d" style="left:597px;top:640px;width:74px;height:23px">
<div class="btxt" style="left:26px">View</div>
</div>
<svg class="abs" style="left:601px;top:642px" width="18" height="18" viewBox="0 0 18 18"><path d="M1.5 1.5 H9 L12.5 5 V15.5 H1.5Z" fill="#c8ecfc" stroke="#1a50e0" stroke-width="1.2"/><path d="M3 3.5 L5 8.5 L7 3.5" stroke="#2050c8" stroke-width="1.3" fill="none"/><circle cx="10.5" cy="9.5" r="3.3" fill="#e0f4ff" stroke="#1a50e0" stroke-width="1.2"/><path d="M9 9.5 l1 1 l1 -1 l1 1" stroke="#1a50e0" stroke-width=".8" fill="none"/><path d="M12.5 12 L16.5 16.5" stroke="#1a50e0" stroke-width="2.2"/></svg>
<div class="btn3d" style="left:681px;top:640px;width:76px;height:23px">
<div class="btxt" style="left:28px">Add</div>
</div>
<svg class="abs" style="left:683px;top:642px" width="18" height="18" viewBox="0 0 18 18"><path d="M5.6 1.6 H12.5 L16.4 5.5 V16.4 H5.6Z" fill="#d8f0fc" stroke="#1a50e0" stroke-width="1.3"/><path d="M12.5 1.6 V5.5 H16.4" fill="#fff" stroke="#1a50e0" stroke-width="1"/><circle cx="6.6" cy="9.4" r="5.6" fill="#1a50e0"/><path d="M3 9.4 h7 M6.6 5.8 v7" stroke="#fff" stroke-width="1.3"/></svg>
<div class="btn3d" style="left:758px;top:640px;width:76px;height:23px">
<div class="btxt" style="left:29px">Edit</div>
</div>
<svg class="abs" style="left:762px;top:642px" width="18" height="18" viewBox="0 0 18 18"><rect x="1.5" y="1.5" width="11" height="15" fill="#fff" stroke="#505860" stroke-width="1.2"/><rect x="2" y="2" width="10" height="7" fill="#40b8f0"/><path d="M3 4 h6 M3 6.5 h6" stroke="#305080" stroke-width=".9"/><path d="M4 14.5 L13 5 L15 7 L6 16Z" fill="#3070d8"/><path d="M13 5 L15 2.5 L17.5 5 L15 7Z" fill="#e02020"/><path d="M4 14.5 L3 16.5 L6 16Z" fill="#000"/></svg>
<div class="btn3d" style="left:836px;top:640px;width:76px;height:23px">
<div class="btxt" style="left:22px">Delete</div>
</div>
<svg class="abs" style="left:837px;top:642px" width="18" height="18" viewBox="0 0 18 18"><path d="M5.6 1.6 H12.5 L16.4 5.5 V16.4 H5.6Z" fill="#d8f0fc" stroke="#1a50e0" stroke-width="1.3"/><path d="M12.5 1.6 V5.5 H16.4" fill="#fff" stroke="#1a50e0" stroke-width="1"/><circle cx="6.6" cy="9.4" r="5.6" fill="#1a50e0"/><path d="M3 9.4 h7.2" stroke="#fff" stroke-width="1.5"/></svg>
<div class="btn3d" style="left:915px;top:640px;width:77px;height:23px">
<div class="btxt" style="left:27px">Close</div>
</div>
<svg class="abs" style="left:919px;top:642px" width="17" height="17" viewBox="0 0 17 17"><defs><radialGradient id="cg" cx="40%" cy="35%" r="65%"><stop offset="0" stop-color="#4a90f8"/><stop offset="1" stop-color="#0a30b0"/></radialGradient></defs><circle cx="8" cy="8.5" r="7.5" fill="url(#cg)"/><path d="M5 5.5 L11 11.5 M11 5.5 L5 11.5" stroke="#fff" stroke-width="2"/></svg>
<div class="abs" style="left:0;top:676px;width:996px;height:3px;background:linear-gradient(#b0b0b0 0,#b0b0b0 1px,#484040 1px)"></div>
</body></html>
